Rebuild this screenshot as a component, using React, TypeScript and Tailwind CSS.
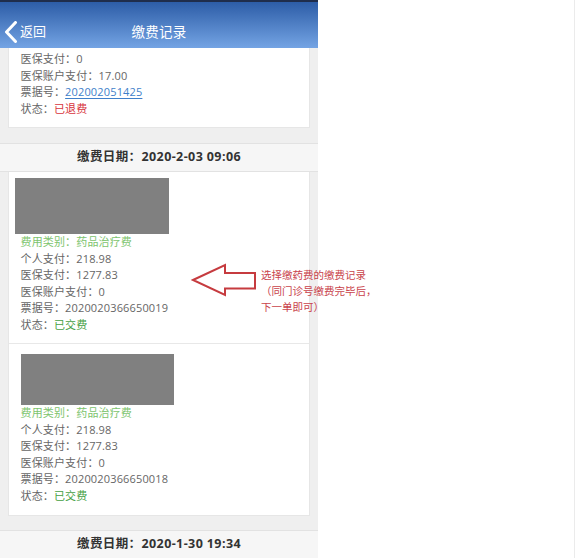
import React from "react";

const FONT = { fontFamily: '"Open Sans", "Noto Sans CJK SC", sans-serif' } as React.CSSProperties;

type Line = { label: string; value: string; kind?: "green" | "red" | "link" | "ok" | "plain" };

function Lines({ lines }: { lines: Line[] }) {
  return (
    <div className="flex flex-col text-[11px] leading-[16.5px] tracking-[0.15px] text-[#666]">
      {lines.map((l, i) => {
        if (l.kind === "green") {
          return (
            <div key={i} className="text-[#7dc46d]">
              {l.label}
              {l.value}
            </div>
          );
        }
        let vc = "";
        if (l.kind === "red") vc = "text-[#d8333c]";
        if (l.kind === "link") vc = "text-[#3f7fca] underline underline-offset-2";
        if (l.kind === "ok") vc = "text-[#45a043]";
        return (
          <div key={i} className="whitespace-nowrap">
            {l.label}
            <span className={vc}>{l.value}</span>
          </div>
        );
      })}
    </div>
  );
}

function DateBar({ text }: { text: string }) {
  return (
    <div className="h-[29px] shrink-0 bg-[#f6f6f6] border-y border-[#e2e2e2] flex items-center justify-center text-[12.5px] font-bold text-[#333] tracking-[0.4px]">
      {text}
    </div>
  );
}

function recLines(no: string): Line[] {
  return [
    { label: "费用类别：", value: "药品治疗费", kind: "green" },
    { label: "个人支付：", value: "218.98" },
    { label: "医保支付：", value: "1277.83" },
    { label: "医保账户支付：", value: "0" },
    { label: "票据号：", value: no },
    { label: "状态：", value: "已交费", kind: "ok" },
  ];
}

export default function App() {
  return (
    <div
      className="relative w-[575px] h-[558px] overflow-hidden bg-white flex border-r border-[#ebebeb]"
      style={FONT}
    >
      <div className="w-[318px] h-full bg-[#efefef] flex flex-col shrink-0">
        {/* header */}
        <div className="h-[48px] shrink-0 border-t-2 border-[#1f2d4c] bg-gradient-to-b from-[#2d5da7] to-[#74a4e4] grid grid-cols-[1fr_auto_1fr] items-center pt-[14px] text-white">
          <div className="flex items-center pl-[4px]">
            <svg width="14" height="22" viewBox="0 0 14 22" className="shrink-0">
              <polyline
                points="11.5,1.5 2.5,11 11.5,20.5"
                fill="none"
                stroke="white"
                strokeWidth="3"
                strokeLinecap="round"
                strokeLinejoin="round"
              />
            </svg>
            <span className="text-[13px] ml-[2px]">返回</span>
          </div>
          <div className="text-[13.5px] tracking-[0.3px]">缴费记录</div>
          <div />
        </div>

        {/* card 1 (partial) */}
        <div className="mx-[8px] bg-white border-x border-b border-[#e6e6e6] pl-[11.5px] pt-[3px] pb-[10px]">
          <Lines
            lines={[
              { label: "医保支付：", value: "0" },
              { label: "医保账户支付：", value: "17.00" },
              { label: "票据号：", value: "202002051425", kind: "link" },
              { label: "状态：", value: "已退费", kind: "red" },
            ]}
          />
        </div>

        <div className="mt-[15px]">
          <DateBar text="缴费日期：2020-2-03 09:06" />
        </div>

        {/* card 2 */}
        <div className="mx-[8px] bg-white border-x border-b border-[#e6e6e6]">
          <div className="pt-[6px] pb-[10px] border-b border-[#e8e8e8]">
            <div className="ml-[6px] w-[154px] h-[56px] bg-[#808080]" />
            <div className="pl-[11.5px]">
              <Lines lines={recLines("2020020366650019")} />
            </div>
          </div>
          <div className="pt-[10px] pb-[11px]">
            <div className="ml-[11.5px] w-[153px] h-[51px] bg-[#808080]" />
            <div className="pl-[11.5px]">
              <Lines lines={recLines("2020020366650018")} />
            </div>
          </div>
        </div>

        <div className="mt-[14px]">
          <DateBar text="缴费日期：2020-1-30 19:34" />
        </div>
      </div>

      {/* annotation overlay */}
      <svg
        className="absolute left-[190px] top-[262px]"
        width="70"
        height="36"
        viewBox="190 262 70 36"
      >
        <polygon
          points="193,280 225,265 225,273 255,273 255,288.5 225,288.5 225,295"
          fill="none"
          stroke="#c63b3f"
          strokeWidth="2"
          strokeLinejoin="miter"
        />
      </svg>
      <div className="absolute left-[261px] top-[267px] text-[10.5px] leading-[16px] text-[#c9434b] whitespace-nowrap">
        <div>选择缴药费的缴费记录</div>
        <div>（同门诊号缴费完毕后，</div>
        <div>下一单即可）</div>
      </div>
    </div>
  );
}
